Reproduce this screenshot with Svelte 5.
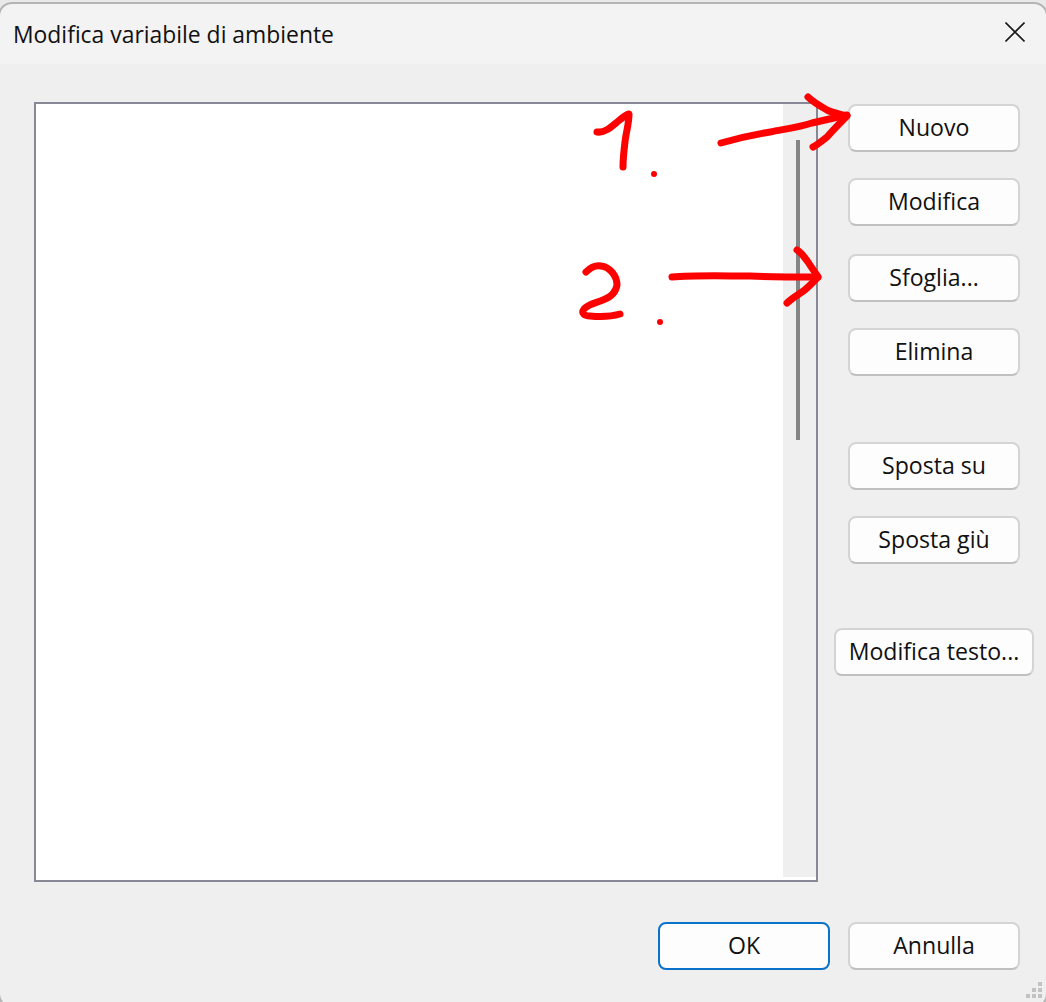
<script>
    const topButtons = ['Nuovo', 'Modifica', 'Sfoglia...', 'Elimina'];
    const moveButtons = ['Sposta su', 'Sposta giù'];
</script>

<div class="page">
    <div class="window">
        <header class="titleBar">
            <span class="title">Modifica variabile di ambiente</span>
            <svg class="close" viewBox="0 0 20 20" width="20" height="20" aria-hidden="true">
                <path d="M0.5 0.5 L19.5 19.5 M19.5 0.5 L0.5 19.5" />
            </svg>
        </header>

        <div class="content">
            <div class="list">
                <div class="listBody"></div>
                <div class="scrollbar">
                    <div class="thumb"></div>
                </div>
            </div>

            <div class="side">
                <div class="group">
                    {#each topButtons as label}
                        <button class="btn">{label}</button>
                    {/each}
                </div>
                <div class="group moves">
                    {#each moveButtons as label}
                        <button class="btn">{label}</button>
                    {/each}
                </div>
                <button class="btn wide">Modifica testo...</button>
            </div>
        </div>

        <footer class="actions">
            <button class="btn primary">OK</button>
            <button class="btn">Annulla</button>
        </footer>
    </div>

    <div class="frame"></div>

    <svg class="grip" viewBox="0 0 16 16" width="16" height="16" aria-hidden="true">
        <rect x="12" y="0" width="4" height="4" />
        <rect x="6" y="6" width="4" height="4" />
        <rect x="12" y="6" width="4" height="4" />
        <rect x="0" y="12" width="4" height="4" />
        <rect x="6" y="12" width="4" height="4" />
        <rect x="12" y="12" width="4" height="4" />
    </svg>

    <!-- red hand-drawn marks on top of the dialog -->
    <svg class="marks" viewBox="0 0 1046 1002" width="1046" height="1002" aria-hidden="true">
        <g fill="none" stroke="#ff0000" stroke-width="7" stroke-linecap="round" stroke-linejoin="round">
            <path d="M597 132 C604 133 610 128 616 123 C621 119 625 115 629 114 C629 124 626 132 625 142 C624 150 623 158 623 167" />
            <path d="M721 143 C735 139 752 135 770 132 C785 129 800 127 812 123 C825 120 838 117 847 115" />
            <path d="M808 97 C813 102 820 106 827 110 C833 113 840 114 847 116 C840 123 834 129 827 137 C822 141 817 145 813 147" />
            <path d="M586 272 C590 268 595 265 601 266 C610 267 617 276 617 285 C616 292 611 297 603 300 C596 303 588 304 584 309 C581 313 584 316 590 316 C600 317 610 317 620 314" />
            <path d="M672 277 C695 275 725 276 750 276 C772 277 795 277 818 277" />
            <path d="M797 250 C802 253 805 258 808 262 C811 267 815 272 818 277 C812 283 808 288 802 292 C796 296 791 299 787 303" />
        </g>
        <circle cx="654" cy="174" r="3" fill="#ff0000" />
        <circle cx="660" cy="322" r="3" fill="#ff0000" />
    </svg>
</div>

<style>
    :global(body) {
        margin: 0;
    }

    .page {
        position: relative;
        width: 1046px;
        height: 1002px;
        overflow: hidden;
        background: #e9e9e9;
    }

    .window {
        box-sizing: border-box;
        width: 1050px;
        height: 1006px;
        margin: 2px 0 0 -2px;
        display: flex;
        flex-direction: column;
        background: #efefef;
        border-radius: 14px;
        overflow: hidden;
        font-family: "Open Sans", "Noto Sans", sans-serif;
        color: #111;
    }

    .frame {
        position: absolute;
        left: -2px;
        right: -2px;
        top: 2px;
        bottom: -6px;
        border: 2px solid #b4b4b4;
        border-radius: 14px;
        pointer-events: none;
    }

    .titleBar {
        box-sizing: border-box;
        height: 62px;
        flex: none;
        display: flex;
        align-items: center;
        justify-content: space-between;
        padding: 2px 23px 0 15px;
        background: #f3f3f3;
    }

    .title {
        font-size: 22.9px;
        color: #111;
    }

    .close {
        margin-top: -4px;
    }

    .close path {
        fill: none;
        stroke: #1c1c1c;
        stroke-width: 1.6;
    }

    .content {
        flex: 1;
        display: flex;
        align-items: flex-start;
        padding: 38px 0 0 36px;
    }

    .list {
        box-sizing: border-box;
        width: 784px;
        height: 780px;
        display: flex;
        border: 2px solid #868995;
        background: #fff;
    }

    .listBody {
        flex: 1;
    }

    .scrollbar {
        width: 33px;
        margin-bottom: 3px;
        background: #efefef;
        padding: 36px 0 0 13px;
        box-sizing: border-box;
    }

    .thumb {
        width: 4px;
        height: 300px;
        background: #858585;
    }

    .side {
        width: 200px;
        margin-left: 16px;
        padding-top: 2px;
        display: flex;
        flex-direction: column;
        align-items: center;
    }

    .group {
        display: flex;
        flex-direction: column;
        gap: 26px;
    }

    .group :nth-child(3) {
        margin-top: 2px;
    }

    .moves {
        margin-top: 66px;
    }

    .btn {
        box-sizing: border-box;
        width: 172px;
        height: 48px;
        padding: 0 0 2px;
        background: #fdfdfd;
        border: 2px solid #d4d4d4;
        border-bottom-color: #c0c0c0;
        border-radius: 8px;
        font: inherit;
        font-size: 23.1px;
        color: #111;
    }

    .wide {
        width: 200px;
        margin-top: 64px;
        white-space: nowrap;
    }

    .actions {
        flex: none;
        display: flex;
        justify-content: flex-end;
        gap: 18px;
        padding: 0 28px 38px 0;
    }

    .primary {
        border-color: #0a72c9;
    }

    .grip {
        position: absolute;
        right: 4px;
        bottom: 4px;
    }

    .grip rect {
        fill: #c2c2c2;
    }

    .marks {
        position: absolute;
        left: 0;
        top: 0;
        pointer-events: none;
    }
</style>
